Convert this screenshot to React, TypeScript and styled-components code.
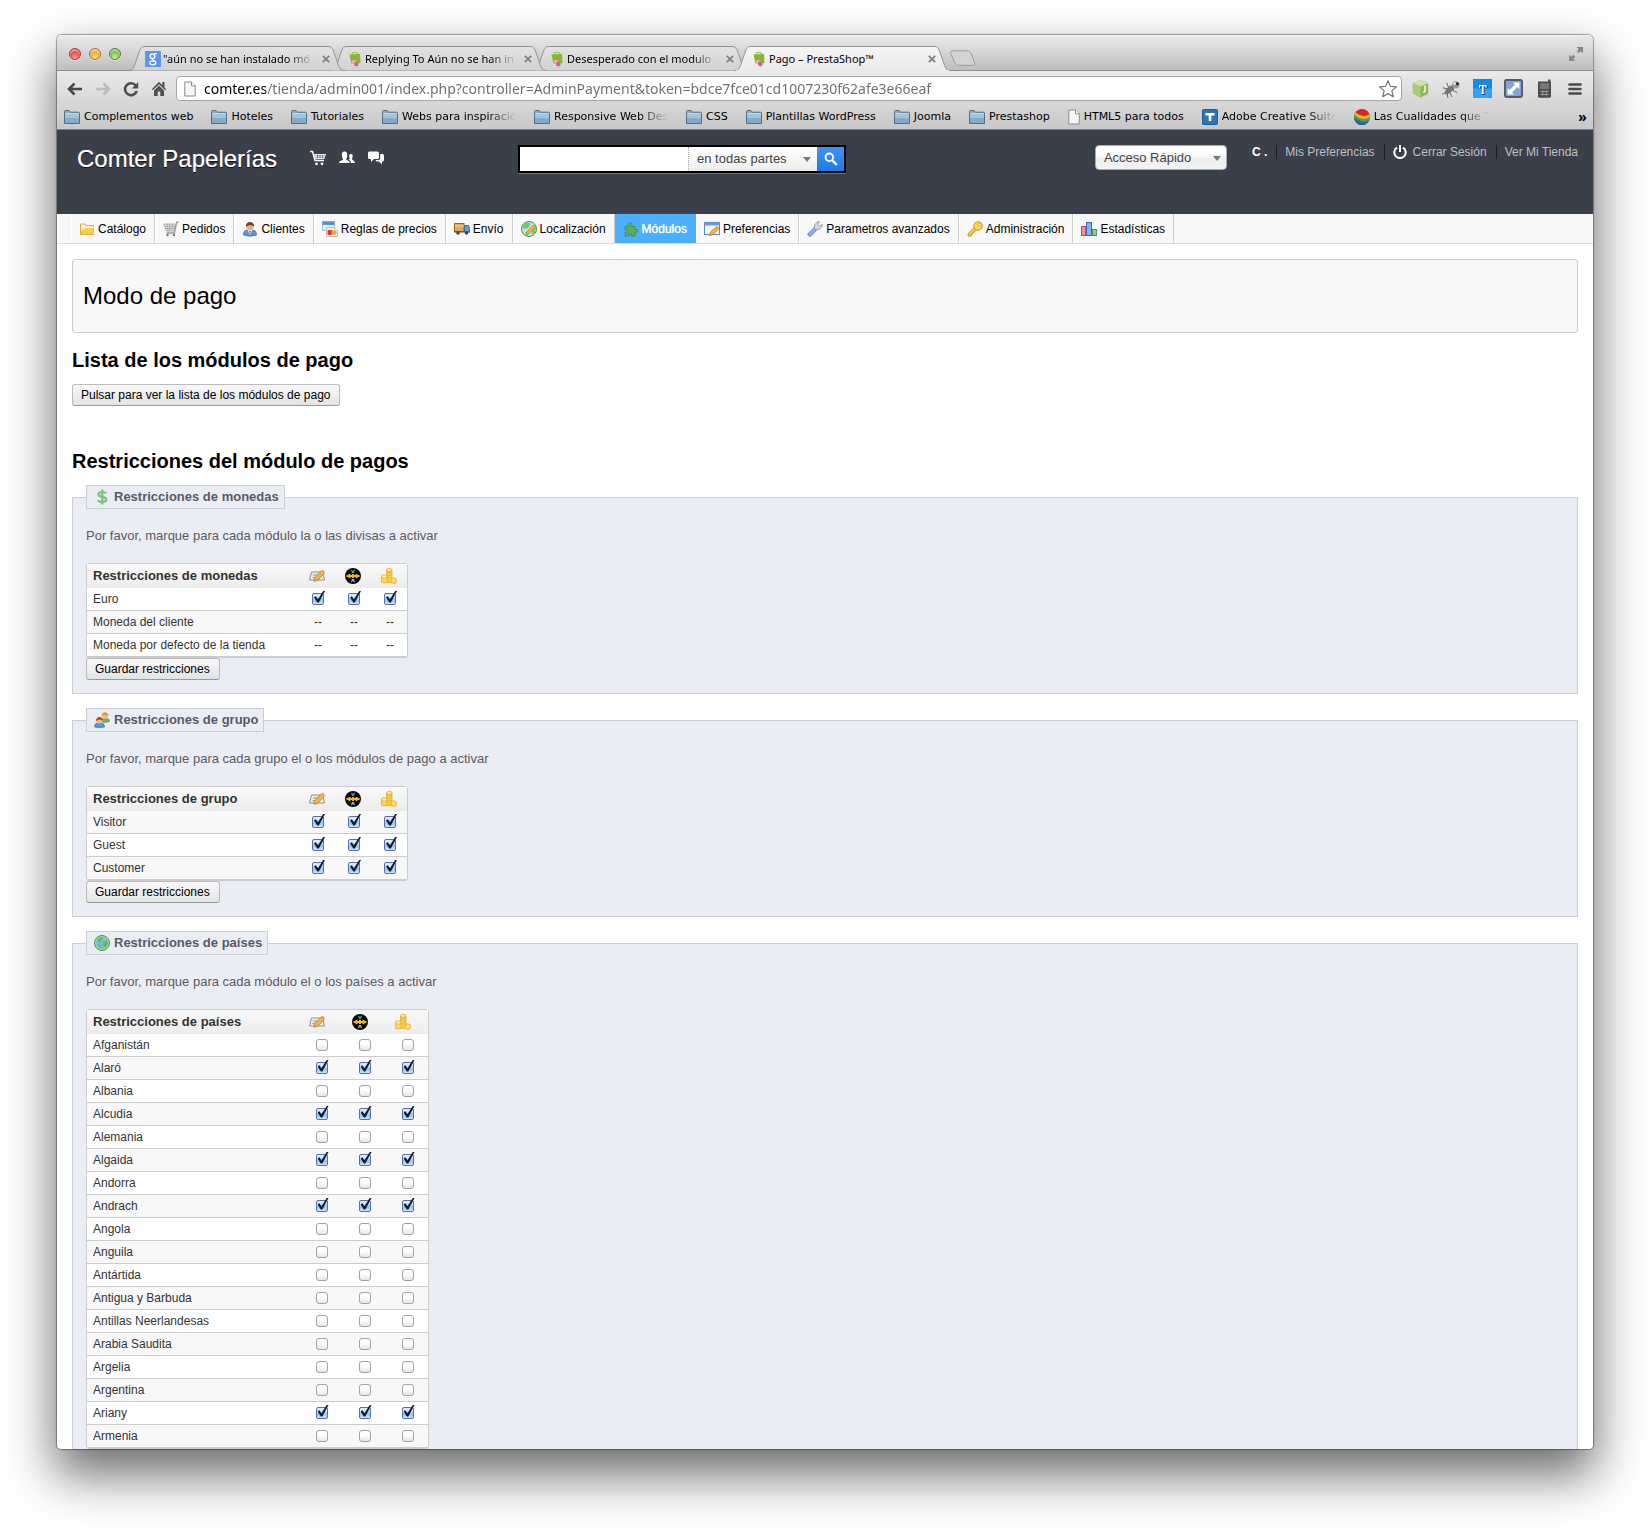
import React from "react";
import styled, { createGlobalStyle, css } from "styled-components";

const sans = `"Liberation Sans", Arial, Helvetica, sans-serif`;
const chromeSans = `"Noto Sans", "DejaVu Sans", sans-serif`;

const GlobalStyle = createGlobalStyle`
  *, *::before, *::after { box-sizing: border-box; }
  body { margin: 0; background: #fff; font-family: ${sans}; }
  button, input, select { font: inherit; color: inherit; margin: 0; }
  a { color: inherit; text-decoration: none; }
  svg { display: block; flex: none; }
`;

/* ---------- window ---------- */

const Desktop = styled.div`
  height: 100vh;
  padding: 35px 57px 79px;
  overflow: hidden;
`;

const Window = styled.div`
  display: flex;
  flex-direction: column;
  height: 100%;
  overflow: hidden;
  background: #fff;
  border-radius: 5px 5px 4px 4px;
  box-shadow: 0 0 1px 1px rgba(0, 0, 0, 0.35), 0 24px 50px 2px rgba(0, 0, 0, 0.58);
`;

const IconButton = styled.button`
  display: grid;
  place-items: center;
  padding: 0;
  border: 0;
  background: none;
  min-width: 16px;
  height: 20px;
`;

const TabStrip = styled.div`
  flex: none;
  display: flex;
  align-items: flex-end;
  height: 36px;
  padding: 0 9px 0 12px;
  background: linear-gradient(#e9e9e9, #bdbdbd);
  border-top: 1px solid #f3f3f3;
  box-shadow: inset 0 -1px #8f8f8f;
`;

const FullscreenButton = styled(IconButton)`
  align-self: center;
`;

const Lights = styled.div`
  display: flex;
  gap: 8px;
  align-self: center;
  margin-right: 7px;
`;

const Light = styled.button<{ $from: string; $to: string; $edge: string }>`
  width: 12px;
  height: 12px;
  padding: 0;
  border: 1px solid ${(p) => p.$edge};
  border-radius: 50%;
  background: radial-gradient(circle at 50% 85%, ${(p) => p.$from}, ${(p) => p.$to} 75%);
  box-shadow: inset 0 2px 1px rgba(255, 255, 255, 0.55), 0 1px rgba(255, 255, 255, 0.5);
`;

const Tabs = styled.ul`
  display: flex;
  flex: 1;
  margin: 0;
  padding: 0;
  list-style: none;
  align-items: flex-end;
`;

const TabItem = styled.li<{ $level: number }>`
  position: relative;
  z-index: ${(p) => p.$level};
  display: flex;
  align-items: center;
  gap: 6px;
  flex: 0 1 217px;
  min-width: 0;
  height: 25px;
  padding: 0 14px 0 17px;
  & + & {
    margin-left: -15px;
  }
`;

const TabShape = styled.svg`
  position: absolute;
  inset: 0;
  z-index: -1;
  width: 100%;
  height: 100%;
`;

const fade = css`
  overflow: hidden;
  white-space: nowrap;
  mask-image: linear-gradient(90deg, #000 calc(100% - 28px), transparent);
`;

const TabLink = styled.a`
  display: flex;
  align-items: center;
  gap: 2px;
  flex: 1;
  min-width: 0;
  font: 11px/16px ${chromeSans};
  color: #000;
`;

const TabTitle = styled.span<{ $fade?: boolean }>`
  flex: 1;
  white-space: nowrap;
  ${(p) => p.$fade && fade}
`;

const TabClose = styled(IconButton)`
  min-width: 10px;
  width: 10px;
`;

const NewTab = styled(IconButton)`
  width: 27px;
  height: 25px;
  margin-left: -2px;
`;

const Toolbar = styled.div`
  flex: none;
  background: linear-gradient(#eaeaea, #c8c8c8);
  border-bottom: 1px solid #7f8286;
`;

const AddressRow = styled.div`
  display: flex;
  align-items: center;
  padding: 5px 8px 0 10px;
`;

const NavButtons = styled.div`
  display: flex;
  gap: 12px;
  margin-right: 9px;
`;

const Omnibox = styled.div`
  flex: 1;
  display: flex;
  align-items: center;
  gap: 8px;
  height: 25px;
  padding: 0 3px 0 7px;
  margin-right: 8px;
  border: 1px solid #a5a5a5;
  border-radius: 4px;
  background: #fff;
`;

const Address = styled.input`
  flex: 1;
  min-width: 0;
  padding: 0;
  border: 0;
  outline: 0;
  font: 14px/20px ${chromeSans};
  background: linear-gradient(90deg, #000 62px, #6c6c6c 62px);
  background-clip: text;
  -webkit-background-clip: text;
  -webkit-text-fill-color: transparent;
`;

const Extensions = styled.div`
  display: flex;
  gap: 11px;
  button {
    width: 20px;
  }
`;

const Bookmarks = styled.nav`
  display: flex;
  align-items: center;
  gap: 18px;
  height: 28px;
  padding: 3px 6px 0 7px;
`;

const Bookmark = styled.a`
  display: flex;
  align-items: center;
  gap: 4px;
  flex: none;
  font: 11px/16px "DejaVu Sans", sans-serif;
  color: #000;
`;

const BookmarkName = styled.span<{ $fade?: boolean }>`
  white-space: nowrap;
  ${(p) => p.$fade && css`width: 114px; ${fade}`}
`;

const More = styled(IconButton)`
  margin-left: auto;
  min-width: 9px;
  font: bold 14px/16px ${chromeSans};
`;

/* ---------- shop header ---------- */

const Header = styled.header`
  flex: none;
  display: flex;
  align-items: flex-start;
  height: 84px;
  padding: 15px 15px 0 20px;
  background: #3a3f49;
`;

const BrandArea = styled.div`
  display: flex;
  align-items: center;
  gap: 33px;
  flex: 0 0 441px;
  height: 26px;
`;

const Brand = styled.a`
  padding-top: 2px;
  font-size: 24px;
  line-height: 26px;
  color: #fff;
  text-shadow: 0 0 1px rgba(255, 255, 255, 0.5), 0 1px 1px #000;
`;

const Alerts = styled.div`
  display: flex;
  gap: 13px;
`;

const Search = styled.form`
  display: flex;
  height: 28px;
  border: 2px solid #000;
  background: #fff;
  box-shadow: 0 1px #6b6f76;
`;

const SearchInput = styled.input`
  width: 168px;
  padding: 0 6px;
  border: 0;
  outline: 0;
  background: #fff;
  font-size: 13px;
`;

const SelectWrap = styled.div`
  position: relative;
  svg {
    position: absolute;
    right: 6px;
    top: 50%;
    margin-top: -2px;
    pointer-events: none;
  }
`;

const ScopeSelect = styled.select`
  appearance: none;
  width: 129px;
  height: 24px;
  padding: 0 20px 2px 8px;
  border: 0;
  border-left: 1px dotted #aaa;
  border-radius: 0;
  background: linear-gradient(#fff, #eee);
  font-size: 13px;
  color: #444;
`;

const SearchButton = styled(IconButton)`
  width: 27px;
  height: 24px;
  background: linear-gradient(#3d94f6, #1e7ae8);
`;

const QuickSelect = styled.select`
  appearance: none;
  width: 132px;
  height: 25px;
  padding: 0 20px 0 8px;
  border: 1px solid #aaa;
  border-radius: 4px;
  background: linear-gradient(#fff 20%, #f6f6f6 50%, #eee 52%, #f4f4f4);
  font-size: 13px;
  color: #444;
`;

const Account = styled.div`
  display: flex;
  margin-left: auto;
  gap: 25px;
`;

const AccountLinks = styled.nav`
  display: flex;
  align-items: center;
  height: 14px;
  font-size: 12px;
  line-height: 14px;
  color: #bfc0c2;
`;

const Employee = styled.strong`
  color: #fff;
`;

const AccountLink = styled.a`
  display: flex;
  align-items: center;
  gap: 6px;
  margin-left: 9px;
  padding-left: 8px;
  border-left: 1px solid #1c1f25;
  white-space: nowrap;
`;

/* ---------- main menu ---------- */

const Menu = styled.nav`
  flex: none;
  display: flex;
  height: 30px;
  padding-left: 14px;
  background: #f8f8f8;
  border-bottom: 1px solid #ddd;
`;

const MenuLink = styled.a<{ $active?: boolean }>`
  display: flex;
  align-items: center;
  gap: 3px;
  padding: 0 8px 0 7px;
  border-left: 1px solid #fff;
  border-right: 1px solid #ccc;
  font-size: 12px;
  line-height: 16px;
  white-space: nowrap;
  color: #000;
  ${(p) =>
    p.$active &&
    css`
      color: #fff;
      background: #4ab0ff;
      border-color: #4ab0ff;
      text-shadow: 0 0 1px #fff;
    `}
`;

/* ---------- content ---------- */

const Main = styled.main`
  flex: 1;
  min-height: 0;
  overflow: hidden;
  padding: 15px 15px 0;
`;

const TitleBox = styled.div`
  padding: 22px 10px;
  border: 1px solid #ccc;
  border-radius: 3px;
  background: #f8f8f8;
`;

const Title = styled.h1`
  margin: 0;
  font-size: 24px;
  line-height: 28px;
  font-weight: 400;
  color: #000;
`;

const Heading = styled.h2<{ $top: number }>`
  margin: ${(p) => p.$top}px 0 12px;
  font-size: 20px;
  line-height: 24px;
  color: #000;
`;

const Button = styled.button`
  display: block;
  height: 22px;
  padding: 0 9px 0 8px;
  border: 1px solid #bbb;
  border-bottom-color: #999;
  border-radius: 3px;
  background: linear-gradient(#f9f9f9, #e3e3e3);
  font-size: 12px;
  line-height: 18px;
  color: #000;
`;

const Group = styled.fieldset`
  min-width: 0;
  margin: 0 0 14px;
  padding: 18px 13px 13px;
  border: 1px solid #ccced7;
  background: #ebedf4;
`;

const Legend = styled.legend`
  display: flex;
  align-items: center;
  gap: 4px;
  height: 24px;
  padding: 0 5px 0 7px;
  border: 1px solid #ccced7;
  background: #ebedf4;
  font-size: 13px;
  line-height: 18px;
  font-weight: 700;
  color: #585a69;
`;

const Hint = styled.p`
  margin: 0 0 18px;
  font-size: 13px;
  line-height: 18px;
  color: #5a5a60;
`;

const Table = styled.table<{ $odd: string; $even: string }>`
  table-layout: fixed;
  border-collapse: separate;
  border-spacing: 0;
  border: 1px solid #ccc;
  border-radius: 3px;
  background: #fff;
  font-size: 12px;
  line-height: 16px;
  color: #333;
  tbody tr:nth-child(odd) {
    background: ${(p) => p.$odd};
  }
  tbody tr:nth-child(even) {
    background: ${(p) => p.$even};
  }
`;

const HeadCell = styled.th`
  height: 24px;
  padding: 0 6px;
  background: linear-gradient(#f9f9f9, #ececec);
  text-align: left;
  font-size: 13px;
  white-space: nowrap;
`;

const NameHead = styled(HeadCell)`
  width: 212px;
`;

const ModuleHead = styled(HeadCell)<{ $width: number }>`
  width: ${(p) => p.$width}px;
  padding: 0 0 0 10px;
`;

const Cell = styled.td`
  height: 23px;
  padding: 0 4px 0 6px;
  border-bottom: 1px solid #ccc;
  white-space: nowrap;
`;

const MarkCell = styled(Cell)`
  text-align: center;
`;

const Check = styled.input`
  appearance: none;
  position: relative;
  display: block;
  width: 12px;
  height: 12px;
  margin: 0 auto;
  border: 1px solid #a3a3a3;
  border-radius: 3px;
  background: linear-gradient(#fff 40%, #e6e6e6);
  &:checked {
    border-color: #5c6da8;
    border-radius: 2px;
    background: linear-gradient(#d9eaf9 20%, #8fc3ee 60%, #c4eaff);
  }
  &:checked::after {
    content: "";
    position: absolute;
    left: 1px;
    top: -3px;
    width: 11px;
    height: 12px;
    background: #0d1a33;
    clip-path: polygon(0 52%, 16% 44%, 36% 68%, 84% 0, 100% 0, 44% 96%, 30% 96%);
  }
`;

/* ---------- icons ---------- */

const Svg = ({ s = 16, children }: { s?: number; children: React.ReactNode }) => (
  <svg width={s} height={s} viewBox="0 0 16 16" aria-hidden="true">
    {children}
  </svg>
);

const Arrow = ({ flip, color }: { flip?: boolean; color: string }) => (
  <Svg>
    <path
      d={flip ? "M1 8h12M8.500 2.500 14 8l-5.500 5.500" : "M15 8H3M7.500 2.500 2 8l5.500 5.500"}
      fill="none"
      stroke={color}
      strokeWidth="2.600"
    />
  </Svg>
);

const Reload = () => (
  <Svg>
    <path d="M13 4.800A6 6 0 1 0 13.800 10" fill="none" stroke="#505050" strokeWidth="2.600" />
    <path d="M15.200 1v6.500H8.800z" fill="#505050" />
  </Svg>
);

const Home = () => (
  <Svg>
    <path d="M8 .8 .8 8.200l1 1L8 3.300l6.200 5.900 1-1L13.500 6.500V1h-2.200v3.200z" fill="#505050" />
    <path d="M8 4.600 3 9.400V15h3.700v-4.500h2.600V15H13V9.400z" fill="#505050" />
  </Svg>
);

const PageIcon = () => (
  <svg width="12" height="16" viewBox="0 0 12 16" aria-hidden="true">
    <path d="M.8 1h6.700l3.700 3.800V15H.8z" fill="#f7f7f7" stroke="#8a8a8a" />
    <path d="M7.500 1v3.800h3.700" fill="#fff" stroke="#8a8a8a" />
  </svg>
);

const Star = () => (
  <Svg s={20}>
    <path
      d="m8 1.400 1.900 4.500 4.800.4-3.600 3.200 1.100 4.700L8 11.700l-4.200 2.500 1.100-4.700L1.300 6.300l4.800-.4z"
      fill="#fff"
      stroke="#777"
      strokeLinejoin="round"
    />
  </Svg>
);

const Cube = () => (
  <Svg s={19}>
    <path d="m8 .8 6.500 2.700v8.700L8 15.500l-6.500-3.300V3.500z" fill="#8ab558" />
    <path d="m8 .8 6.500 2.700L8 6.300 1.500 3.500z" fill="#d0e2ae" />
    <path d="M8 6.300v9.200l-6.500-3.300V3.500z" fill="#a9cc78" />
    <path d="M11.800 5.500v5l-1.500 1" stroke="#fff" strokeWidth="1.200" fill="none" />
  </Svg>
);

const Bug = () => (
  <Svg s={20}>
    <ellipse cx="7" cy="8.500" rx="5" ry="2.300" transform="rotate(-40 7 8.500)" fill="#777" />
    <circle cx="11.800" cy="4.600" r="2.900" fill="#999" />
    <circle cx="13.200" cy="3.800" r="1.200" fill="#222" />
    <circle cx="10.800" cy="3.600" r="1" fill="#eee" />
    <path
      d="m5 8-3.500-1M6 6.500 4.500 3M7 11l2 3.500M5 12l.5 3M9.500 9l3.500 2M3 11l-2 1.500"
      stroke="#666"
      strokeWidth=".8"
      fill="none"
    />
  </Svg>
);

const BlueT = () => (
  <Svg s={19}>
    <rect width="16" height="16" fill="#118be6" />
    <rect y="8" width="16" height="8" fill="#34a2f3" />
    <path d="M5 5h6.500v2.300h-.8L10.200 6H9v6l.8.7H6.700l.8-.7V6H6.300l-.5 1.300H5z" fill="#222" transform="translate(.6 .6)" />
    <path d="M5 5h6.500v2.300h-.8L10.200 6H9v6l.8.7H6.700l.8-.7V6H6.300l-.5 1.300H5z" fill="#fff" />
  </Svg>
);

const Resize = () => (
  <Svg s={19}>
    <rect x=".8" y=".8" width="14.400" height="14.400" rx="1.500" fill="#7fa3dc" stroke="#555a63" strokeWidth="1.600" />
    <path d="M3 13V7.500l1.700 1.700L9.200 4.700 7.500 3H13v5.500l-1.700-1.700-4.500 4.500L8.500 13z" fill="#fff" />
  </Svg>
);

const Phone = () => (
  <Svg s={19}>
    <path d="M2.500 2H11V.5h2V2l.5.600V15l-.8.800H3.300L2.500 15z" fill="#4b4b4b" />
    <rect x="4" y="3.500" width="8" height="5" fill="#777" />
    <path d="M4.500 10.500h7M4.500 13h7M6.500 9.500v4.500M9.500 9.500v4.500" stroke="#aaa" strokeWidth=".7" />
  </Svg>
);

const Burger = () => (
  <Svg>
    <path d="M2.500 3.500h11M2.500 8h11M2.500 12.500h11" stroke="#484848" strokeWidth="2.600" strokeLinecap="round" />
  </Svg>
);

const Fullscreen = () => (
  <Svg>
    <path
      d="M15 1v6.500l-2.200-2.200-2 2-2.100-2.100 2-2L8.500 1zM1 15V8.500l2.200 2.200 2-2 2.100 2.100-2 2L7.500 15z"
      fill="#888"
    />
  </Svg>
);

const GoogleIcon = () => (
  <Svg>
    <rect width="16" height="16" rx="1" fill="#5b96f5" />
    <circle cx="7.500" cy="5.200" r="2.300" fill="none" stroke="#fff" strokeWidth="1.400" />
    <path d="M9 2.600h3M8.700 7.400C6 8.600 8 9.200 9.300 10" stroke="#fff" strokeWidth="1.300" fill="none" />
    <ellipse cx="7.800" cy="11.800" rx="3" ry="2" fill="none" stroke="#fff" strokeWidth="1.300" />
  </Svg>
);

const ShopIcon = () => (
  <Svg>
    <path d="M5.500 4V2.500C5.500 1 10.500 1 10.500 2.500V4" stroke="#a8c96b" strokeWidth="1.300" fill="none" />
    <path d="m2.500 3.500 10.500-.5.500 9-9 .500z" fill="#86b82a" />
    <circle cx="8.300" cy="10.700" r="1.900" fill="#e88fb4" />
    <circle cx="6.500" cy="10.500" r="1.300" fill="#f3c3d6" />
    <circle cx="9.300" cy="13" r="2.400" fill="#d95f92" />
  </Svg>
);

const FolderIcon = () => (
  <Svg>
    <path d="M.5 14.500V2.500q0-1 1-1H5l1.500 1.700h8q1 0 1 1v10.300z" fill="#84abc8" stroke="#4d6f8b" />
    <path d="M1 5h14v4H1z" fill="#a5c3d8" />
    <path d="M1 4.600h14" stroke="#c9dce9" />
  </Svg>
);

const TileT = () => (
  <Svg>
    <rect x=".5" y=".5" width="15" height="15" rx="1" fill="#2a76b4" stroke="#1a5e97" />
    <path d="M3.500 4h9v2.500H9.300V12H6.700V6.500H3.500z" fill="#fff" />
  </Svg>
);

const Rainbow = () => (
  <Svg>
    <clipPath id="ball">
      <circle cx="8" cy="8" r="8" />
    </clipPath>
    <g clipPath="url(#ball)">
      <rect width="16" height="16" fill="#d8281e" />
      <path d="M0 2q8 8 16 3v11H0z" fill="#f9b21c" />
      <path d="M0 5q8 8 16 3v8H0z" fill="#49a942" />
      <path d="M0 8q8 7 16 3v5H0z" fill="#1b75bc" />
      <path d="M0 11q8 7 16 2v3H0z" fill="#5b3c97" />
    </g>
  </Svg>
);

const HeaderCart = () => (
  <Svg>
    <path d="M0 1.500h2.500L5 10.500h9" stroke="#fff" strokeWidth="1.500" fill="none" />
    <path d="M4 4h12l-1.800 5H5.300z" fill="#fff" />
    <path d="M5 5.700h10M5.500 7.400h9M7.500 4.500v4M10 4.500v4M12.500 4.500v4" stroke="#3a3f49" strokeWidth=".5" />
    <circle cx="6.500" cy="13.800" r="1.400" fill="#fff" />
    <circle cx="12" cy="13.800" r="1.400" fill="#fff" />
  </Svg>
);

const HeaderUsers = () => (
  <Svg>
    <path d="M0 13q0-2 4-3 0-1-.8-2.500C2 2.500 4 1.500 5.600 1.500S9 2.500 8 7.500Q7 9 7.200 10q3.600 1 3.600 3z" fill="#fff" />
    <path d="M9.500 9.500q1.500-.5 1.200-1.500c-1.200-2.500-.2-4 1.300-4s2.400 1.500 1.200 4q-.4 1.500.3 2 2.500.8 2.500 3h-4q0-2.200-2.500-3.500z" fill="#fff" />
  </Svg>
);

const HeaderChat = () => (
  <Svg>
    <path d="M1.500 1.500h8q1.500 0 1.500 1.500v4.500Q11 9 9.500 9H6l-3 3V9H1.500Q0 9 0 7.500V3q0-1.500 1.500-1.500z" fill="#fff" />
    <path d="M12.200 4h2.300q1.500 0 1.500 1.500V10q0 1.500-1.500 1.500H14v3l-3-3H8.500L7.500 10H11q1.200-.5 1.200-2z" fill="#fff" />
  </Svg>
);

const Magnifier = () => (
  <Svg>
    <circle cx="6.300" cy="6.300" r="3.800" fill="none" stroke="#fff" strokeWidth="1.800" />
    <path d="m9.300 9.300 4.500 4.500" stroke="#fff" strokeWidth="2.400" />
  </Svg>
);

const Power = () => (
  <svg width="14" height="16" viewBox="0 0 14 16" aria-hidden="true">
    <path d="M4 3.500a5.700 5.700 0 1 0 6 0" fill="none" stroke="#fff" strokeWidth="2" />
    <path d="M7 1v7" stroke="#fff" strokeWidth="2" />
  </svg>
);

const Caret = () => (
  <svg width="8" height="5" viewBox="0 0 8 5" aria-hidden="true">
    <path d="M0 0h8L4 5z" fill="#777" />
  </svg>
);

const menuIcons: Record<string, React.ReactNode> = {
  catalog: (
    <Svg>
      <path d="M1.500 13.500V3H6l1 1.500h7.500v9z" fill="#fdf3c4" stroke="#dcb040" />
      <path d="M2 13V7.500h3L6.500 6h8v7z" fill="#f6cf4e" />
      <path d="M2 8h3.300L6.800 6.500h7.700" stroke="#fff9dd" fill="none" />
    </Svg>
  ),
  orders: (
    <Svg>
      <path
        d="M.8 3h11.500l-1.300 7H3.500zM2 5.300h10M2.700 7.500H11.500M4 3l1.200 7M6.700 3v7M9.500 3l-.8 7"
        fill="#f0f0f0"
        stroke="#999"
        strokeWidth=".8"
      />
      <path d="M15.800 1.200H13.700L11.500 12H3.500" fill="none" stroke="#9a9a9a" strokeWidth="1.300" />
      <circle cx="4.500" cy="14" r="1.200" fill="#777" />
      <circle cx="11" cy="14" r="1.200" fill="#777" />
    </Svg>
  ),
  customers: (
    <Svg>
      <path d="M1.500 14q0-5 4-5h5q4 0 4 5-6 2.500-13 0z" fill="#5b93cf" stroke="#3c6da6" strokeWidth=".7" />
      <path d="m5.500 9 2.500 5 2.500-5z" fill="#dce9f6" />
      <path d="m7.200 10 .8 3.500.8-3.500z" fill="#c8372d" />
      <circle cx="8" cy="5.200" r="3.700" fill="#e9b084" />
      <path d="M4 6C3-.8 13-.8 12 6 11.200 3.800 5.500 3.500 4 6z" fill="#7b4316" />
    </Svg>
  ),
  rules: (
    <Svg>
      <rect x=".5" y=".5" width="12" height="9" fill="#e6effa" stroke="#a8bfdc" />
      <path d="M.5.500h12v3.500H.5z" fill="#5c8fd2" />
      <path d="M4.500 6.500h7l4 3v6h-11z" fill="#f8f8f8" stroke="#bbb" />
      <rect x="5.500" y="9" width="4.500" height="5" rx="1" fill="#e23b34" />
      <circle cx="12" cy="11.500" r="2.500" fill="#f6a531" />
    </Svg>
  ),
  shipping: (
    <Svg>
      <rect x=".5" y="2.500" width="9.500" height="8" fill="#e0a861" stroke="#94652c" />
      <path d="M1 5h9" stroke="#f6d6a3" />
      <path d="M10.500 4.500h4l1 3.500v3h-5z" fill="#6f9fd6" stroke="#44698f" />
      <path d="M0 11h16" stroke="#555" strokeWidth="1.200" />
      <circle cx="4" cy="12" r="1.700" fill="#444" />
      <circle cx="12.500" cy="12" r="1.700" fill="#444" />
    </Svg>
  ),
  local: (
    <Svg>
      <circle cx="8" cy="8" r="7.500" fill="#c3e2f5" stroke="#3f9b3d" />
      <path d="M3 3q4-3 7 0L7 7 4 8 1.500 7zM12 5l2.500 2-1 5-3 1.500zM4 11l3 1v3z" fill="#7cc56b" />
      <path d="m5 14 1-3.500L12.500 4l2 2-7 7z" fill="#f6b73c" stroke="#b77714" strokeWidth=".8" />
    </Svg>
  ),
  modules: (
    <Svg>
      <path
        d="M2 5.500h3.500C4 2 8.500.5 9 3.500q0 1-.7 2H12V8.500q2.500-1.500 3 1t-3 1.500V15H8.500q1-2.700-1-2.700T6.300 15H2v-3.500q3 .5 3-1.300T2 9z"
        fill="#5fae56"
        stroke="#3e8c4c"
        strokeWidth=".8"
      />
    </Svg>
  ),
  prefs: (
    <Svg>
      <rect x=".5" y="1.500" width="15" height="12" fill="#f3f7fc" stroke="#5a86c4" />
      <path d="M.5 1.500h15v3H.5z" fill="#6d9ade" />
      <path d="m5.500 14.500 1-3.500L13 5.500l2 2L9 13.500z" fill="#f7b63c" stroke="#b56f18" strokeWidth=".8" />
    </Svg>
  ),
  tools: (
    <Svg>
      <path d="m1.500 12 5.800-5.500 2.500 2.500-5.500 5.800q-1.500 1.200-2.800 0t0-2.800z" fill="#8faaea" stroke="#5f7dc2" strokeWidth=".8" />
      <path d="M7.500 8.500V4L10.500.800h2L10.800 3.300l1.900 1.900L15.200 3.500v2L12 8.500z" fill="#d5dae2" stroke="#8a909c" strokeWidth=".8" />
    </Svg>
  ),
  admin: (
    <Svg>
      <path d="m1 15 .3-2.700L8 6l2.300 2.300L7.500 11H6v1.700H4.300V15z" fill="#f4cf3f" stroke="#b88813" strokeWidth=".8" />
      <circle cx="11" cy="5" r="4.300" fill="#f9da52" stroke="#b88813" strokeWidth=".8" />
      <circle cx="12.300" cy="3.700" r="1.300" fill="#fff" stroke="#b88813" strokeWidth=".6" />
    </Svg>
  ),
  stats: (
    <Svg>
      <rect x=".5" y="5.500" width="4" height="9" fill="#f58f90" stroke="#d8484b" />
      <rect x="5.500" y="1.500" width="5" height="13" fill="#86aff2" stroke="#3c6cc2" />
      <rect x="11.500" y="8.500" width="4" height="6" fill="#8acb85" stroke="#4a9a4a" />
    </Svg>
  ),
};

const Dollar = () => (
  <Svg>
    <path
      d="M12 4.700Q11.500 3 8.300 3 4.500 3 4.500 5.300T8.300 8q4 .6 4 2.800T8.300 13Q4.500 13 4 11M8.300.5v15"
      fill="none"
      stroke="#7cc07a"
      strokeWidth="2.200"
    />
  </Svg>
);

const GroupIcon = () => (
  <Svg>
    <path d="M7 9.500q0-3 3-3h2.500q3 0 3 3-4.500 2-8.500 0z" fill="#6fb55a" stroke="#4b8f3b" strokeWidth=".6" />
    <circle cx="11" cy="3.800" r="3.100" fill="#f0b98b" />
    <path d="M7.700 4.300C7.300-1 14.700-1 14.300 4.300 13 2.500 10 2.500 7.700 4.300z" fill="#d59d2f" />
    <path d="M.5 15q0-4 3-4h4q3 0 3 4-5 1.500-10 0z" fill="#5b95e0" stroke="#3468b0" strokeWidth=".6" />
    <circle cx="5.500" cy="8.500" r="3.200" fill="#f0b98b" />
    <path d="M2.100 9C1.800 3.800 9.200 3.800 8.900 9 7.500 7.200 4.500 7.200 2.100 9z" fill="#a4521d" />
  </Svg>
);

const Globe = () => (
  <Svg>
    <circle cx="8" cy="8" r="7.500" fill="#9fdb98" stroke="#3f9b4a" />
    <circle cx="8" cy="8" r="5.800" fill="#7bb8e4" />
    <path d="M3 5q3-4 6-2.500L7.500 6 5 8zM9 7l4-2 1 4-3 4-2-3zM4 10l3 1v3z" fill="#66bb5e" />
  </Svg>
);

const ChequeIcon = () => (
  <Svg>
    <path d="M2.500 4h11l2 8H.5z" fill="#ececec" stroke="#8e8e8e" />
    <path d="M4 7h5M3.500 9.500h4" stroke="#999" />
    <path d="m5 13.300 1-4L12.800 2.500l2.700 2.300L9 12z" fill="#f7b549" stroke="#b5772a" strokeWidth=".8" />
    <path d="m12.800 2.500 1-1 2 2-.8 1z" fill="#e9a3a0" />
  </Svg>
);

const GatewayIcon = () => (
  <Svg>
    <circle cx="8" cy="8" r="8" fill="#0a0a0a" />
    <path d="M1.500 8h13" stroke="#f1b521" strokeWidth="2" />
    <path d="M4.500 6v4M8 6v4M11.500 6v4" stroke="#f1b521" strokeWidth="2" />
    <path d="m5.800 1.500 2.200 1.200 2.200-1.200-1.200 3.500H7z" fill="#4f9e77" />
    <path d="m5.800 14.500 2.200-1.200 2.200 1.200-1.200-3.500H7z" fill="#8fa7dc" />
  </Svg>
);

const CoinsIcon = () => (
  <Svg>
    <path d="M5.500 2v12q3 1.500 5.500 0V2z" fill="#fad04a" stroke="#dda520" strokeWidth=".7" />
    <path d="M5.800 4.800h5M5.800 7.300h5M5.800 9.800h5" stroke="#e6b02c" strokeWidth=".7" />
    <ellipse cx="8.250" cy="1.900" rx="2.750" ry="1.500" fill="#fdeca0" stroke="#dda520" strokeWidth=".7" />
    <path d="M.4 8.500v5.700q2.800 1.800 5.800 0V8.500z" fill="#fbd658" stroke="#dda520" strokeWidth=".7" />
    <ellipse cx="3.300" cy="8.500" rx="2.900" ry="1.700" fill="#fdeca0" stroke="#dda520" strokeWidth=".7" />
    <ellipse cx="12.800" cy="12.600" rx="2.900" ry="2.800" fill="#fcdc68" stroke="#dda520" strokeWidth=".7" />
  </Svg>
);

/* ---------- data ---------- */

const tabs = [
  { title: "\"aún no se han instalado mó", icon: <GoogleIcon />, fade: true },
  { title: "Replying To Aún no se han in", icon: <ShopIcon />, fade: true },
  { title: "Desesperado con el modulo", icon: <ShopIcon />, fade: true },
  { title: "Pago – PrestaShop™", icon: <ShopIcon />, active: true },
];

const bookmarks = [
  { name: "Complementos web" },
  { name: "Hoteles" },
  { name: "Tutoriales" },
  { name: "Webs para inspiració", fade: true },
  { name: "Responsive Web Des", fade: true },
  { name: "CSS" },
  { name: "Plantillas WordPress" },
  { name: "Joomla" },
  { name: "Prestashop" },
  { name: "HTML5 para todos", icon: <PageIcon /> },
  { name: "Adobe Creative Suite", icon: <TileT />, fade: true },
  { name: "Las Cualidades que T", icon: <Rainbow />, fade: true },
];

const menu = [
  ["catalog", "Catálogo"],
  ["orders", "Pedidos"],
  ["customers", "Clientes"],
  ["rules", "Reglas de precios"],
  ["shipping", "Envío"],
  ["local", "Localización"],
  ["modules", "Módulos"],
  ["prefs", "Preferencias"],
  ["tools", "Parametros avanzados"],
  ["admin", "Administración"],
  ["stats", "Estadísticas"],
];

type Row = { name: string; state: "on" | "off" | "none" };

const on = (name: string): Row => ({ name, state: "on" });
const off = (name: string): Row => ({ name, state: "off" });
const none = (name: string): Row => ({ name, state: "none" });

const currencies = [on("Euro"), none("Moneda del cliente"), none("Moneda por defecto de la tienda")];
const groups = [on("Visitor"), on("Guest"), on("Customer")];
const countries = [
  off("Afganistán"),
  on("Alaró"),
  off("Albania"),
  on("Alcudia"),
  off("Alemania"),
  on("Algaida"),
  off("Andorra"),
  on("Andrach"),
  off("Angola"),
  off("Anguila"),
  off("Antártida"),
  off("Antigua y Barbuda"),
  off("Antillas Neerlandesas"),
  off("Arabia Saudita"),
  off("Argelia"),
  off("Argentina"),
  on("Ariany"),
  off("Armenia"),
];

const modules = [
  { id: "cheque", icon: <ChequeIcon /> },
  { id: "gateway", icon: <GatewayIcon /> },
  { id: "cash", icon: <CoinsIcon /> },
];

/* ---------- parts ---------- */

type TabProps = {
  title: string;
  icon: React.ReactNode;
  active?: boolean;
  fade?: boolean;
  level: number;
};

const BrowserTab = ({ title, icon, active, fade: faded, level }: TabProps) => (
  <TabItem $level={level}>
    <TabShape viewBox="0 0 217 25" preserveAspectRatio="none" aria-hidden="true">
      <defs>
        <linearGradient id={`tab${level}`} x2="0" y2="1">
          <stop offset="0" stopColor={active ? "#f6f6f6" : "#e2e2e2"} />
          <stop offset="1" stopColor={active ? "#eaeaea" : "#d2d2d2"} />
        </linearGradient>
      </defs>
      <path
        d="M0 24.500C5 24.500 5.500 22 7 18L11.500 5C13 1.500 14 .5 17 .5H200C203 .5 204 1.500 205.500 5L210 18C211.500 22 212 24.500 217 24.500"
        fill={`url(#tab${level})`}
        stroke="#939393"
      />
      {active && <path d="M2 24.800H215" stroke="#eaeaea" strokeWidth="1.500" />}
    </TabShape>
    <TabLink href="#">
      {icon}
      <TabTitle $fade={faded}>{title}</TabTitle>
    </TabLink>
    <TabClose aria-label={`Cerrar ${title}`}>
      <svg width="8" height="8" viewBox="0 0 8 8" aria-hidden="true">
        <path d="m.8.800 6.400 6.400M7.200.800.8 7.200" stroke="#808080" strokeWidth="1.800" />
      </svg>
    </TabClose>
  </TabItem>
);

type GroupProps = {
  title: string;
  hint: string;
  icon: React.ReactNode;
  rows: Row[];
  column: number;
  shadeFirst?: boolean;
  action?: string;
};

const Restrictions = ({ title, hint, icon, rows, column, shadeFirst, action }: GroupProps) => (
  <Group>
    <Legend>
      {icon}
      {title}
    </Legend>
    <Hint>{hint}</Hint>
    <Table $odd={shadeFirst ? "#f8f8f8" : "#fff"} $even={shadeFirst ? "#fff" : "#f8f8f8"}>
      <thead>
        <tr>
          <NameHead scope="col">{title}</NameHead>
          {modules.map((m) => (
            <ModuleHead key={m.id} scope="col" $width={column} aria-label={m.id}>
              {m.icon}
            </ModuleHead>
          ))}
        </tr>
      </thead>
      <tbody>
        {rows.map((row) => (
          <tr key={row.name}>
            <Cell>{row.name}</Cell>
            {modules.map((m) => (
              <MarkCell key={m.id}>
                {row.state === "none" ? (
                  "--"
                ) : (
                  <Check type="checkbox" defaultChecked={row.state === "on"} aria-label={`${row.name}, ${m.id}`} />
                )}
              </MarkCell>
            ))}
          </tr>
        ))}
      </tbody>
    </Table>
    {action && <Button type="button">{action}</Button>}
  </Group>
);

export default function App() {
  return (
    <Desktop>
      <GlobalStyle />
      <Window>
        <TabStrip>
          <Lights>
            <Light aria-label="Cerrar" $from="#ff9a94" $to="#d9362f" $edge="#a33b38" />
            <Light aria-label="Minimizar" $from="#ffe08a" $to="#e59a25" $edge="#a8742a" />
            <Light aria-label="Ampliar" $from="#c5f0a0" $to="#63ad3d" $edge="#55823a" />
          </Lights>
          <Tabs>
            {tabs.map((t, i) => (
              <BrowserTab key={t.title} {...t} level={t.active ? 9 : 5 - i} />
            ))}
            <NewTab aria-label="Pestaña nueva">
              <svg width="27" height="17" viewBox="0 0 27 17" aria-hidden="true">
                <path
                  d="M4 .8h14.500q2.500 0 3.500 2.500l3.500 9.500q.8 2.500-1.500 2.500H9.500q-2.500 0-3.500-2.500L1.500 3.300Q.8.800 4 .8z"
                  fill="#d4d4d4"
                  stroke="#9b9b9b"
                />
              </svg>
            </NewTab>
          </Tabs>
          <FullscreenButton aria-label="Pantalla completa">
            <Fullscreen />
          </FullscreenButton>
        </TabStrip>
        <Toolbar>
          <AddressRow>
            <NavButtons>
              <IconButton aria-label="Atrás">
                <Arrow color="#484848" />
              </IconButton>
              <IconButton aria-label="Adelante">
                <Arrow flip color="#bcbcbc" />
              </IconButton>
              <IconButton aria-label="Recargar">
                <Reload />
              </IconButton>
              <IconButton aria-label="Inicio">
                <Home />
              </IconButton>
            </NavButtons>
            <Omnibox>
              <PageIcon />
              <Address
                aria-label="Dirección"
                defaultValue="comter.es/tienda/admin001/index.php?controller=AdminPayment&token=bdce7fce01cd1007230f62afe3e66eaf"
              />
              <IconButton aria-label="Favorito">
                <Star />
              </IconButton>
            </Omnibox>
            <Extensions>
              <IconButton aria-label="Paquete">
                <Cube />
              </IconButton>
              <IconButton aria-label="Firebug">
                <Bug />
              </IconButton>
              <IconButton aria-label="Tipografía">
                <BlueT />
              </IconButton>
              <IconButton aria-label="Tamaño de ventana">
                <Resize />
              </IconButton>
              <IconButton aria-label="Móvil">
                <Phone />
              </IconButton>
              <IconButton aria-label="Menú">
                <Burger />
              </IconButton>
            </Extensions>
          </AddressRow>
          <Bookmarks aria-label="Marcadores">
            {bookmarks.map((b) => (
              <Bookmark key={b.name} href="#">
                {b.icon ?? <FolderIcon />}
                <BookmarkName $fade={b.fade}>{b.name}</BookmarkName>
              </Bookmark>
            ))}
            <More>»</More>
          </Bookmarks>
        </Toolbar>

        <Header>
          <BrandArea>
            <Brand href="#">Comter Papelerías</Brand>
            <Alerts>
              <IconButton aria-label="Pedidos nuevos">
                <HeaderCart />
              </IconButton>
              <IconButton aria-label="Clientes nuevos">
                <HeaderUsers />
              </IconButton>
              <IconButton aria-label="Mensajes nuevos">
                <HeaderChat />
              </IconButton>
            </Alerts>
          </BrandArea>
          <Search>
            <SearchInput aria-label="Buscar" />
            <SelectWrap>
              <ScopeSelect aria-label="Ámbito de búsqueda">
                <option>en todas partes</option>
              </ScopeSelect>
              <Caret />
            </SelectWrap>
            <SearchButton type="button" aria-label="Buscar">
              <Magnifier />
            </SearchButton>
          </Search>
          <Account>
            <SelectWrap>
              <QuickSelect aria-label="Acceso rápido">
                <option>Acceso Rápido</option>
              </QuickSelect>
              <Caret />
            </SelectWrap>
            <AccountLinks>
              <Employee>C .</Employee>
              <AccountLink href="#">Mis Preferencias</AccountLink>
              <AccountLink href="#">
                <Power />
                Cerrar Sesión
              </AccountLink>
              <AccountLink href="#">Ver Mi Tienda</AccountLink>
            </AccountLinks>
          </Account>
        </Header>

        <Menu>
          {menu.map(([id, label]) => (
            <MenuLink key={id} href="#" $active={id === "modules"}>
              {menuIcons[id]}
              {label}
            </MenuLink>
          ))}
        </Menu>

        <Main>
          <TitleBox>
            <Title>Modo de pago</Title>
          </TitleBox>
          <Heading $top={15}>Lista de los módulos de pago</Heading>
          <Button type="button">Pulsar para ver la lista de los módulos de pago</Button>
          <Heading $top={43}>Restricciones del módulo de pagos</Heading>
          <Restrictions
            title="Restricciones de monedas"
            hint="Por favor, marque para cada módulo la o las divisas a activar"
            icon={<Dollar />}
            rows={currencies}
            column={36}
            action="Guardar restricciones"
          />
          <Restrictions
            title="Restricciones de grupo"
            hint="Por favor, marque para cada grupo el o los módulos de pago a activar"
            icon={<GroupIcon />}
            rows={groups}
            column={36}
            shadeFirst
            action="Guardar restricciones"
          />
          <Restrictions
            title="Restricciones de países"
            hint="Por favor, marque para cada módulo el o los países a activar"
            icon={<Globe />}
            rows={countries}
            column={43}
          />
        </Main>
      </Window>
    </Desktop>
  );
}
